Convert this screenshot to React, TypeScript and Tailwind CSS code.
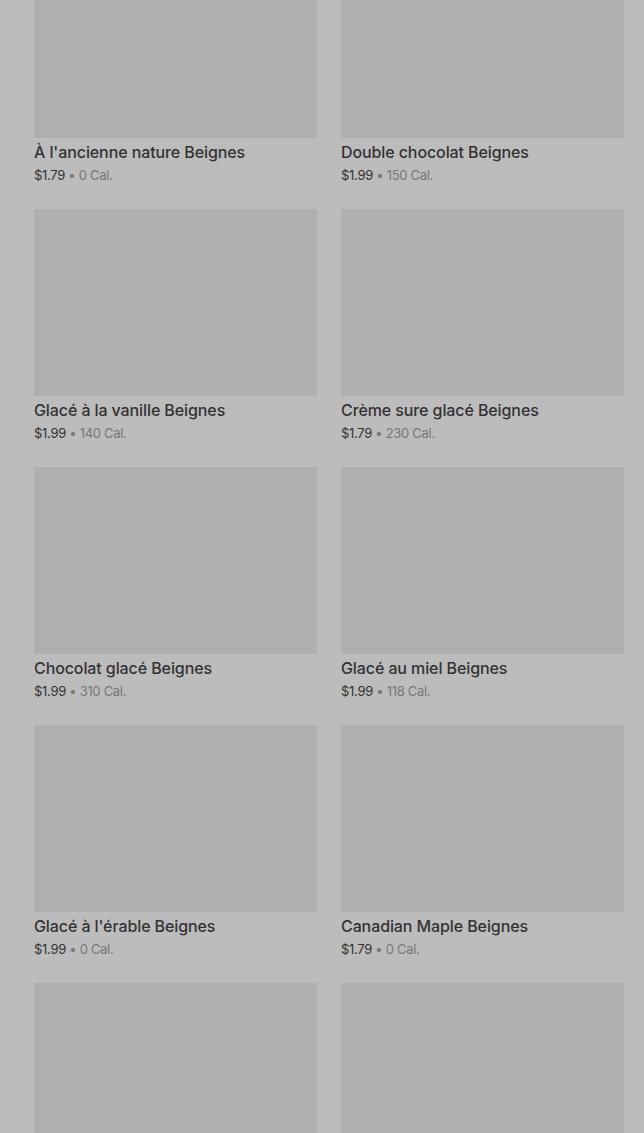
const items = [
  { name: "À l'ancienne nature Beignes", price: "$1.79", cal: "0 Cal." },
  { name: "Double chocolat Beignes", price: "$1.99", cal: "150 Cal." },
  { name: "Glacé à la vanille Beignes", price: "$1.99", cal: "140 Cal." },
  { name: "Crème sure glacé Beignes", price: "$1.79", cal: "230 Cal." },
  { name: "Chocolat glacé Beignes", price: "$1.99", cal: "310 Cal." },
  { name: "Glacé au miel Beignes", price: "$1.99", cal: "118 Cal." },
  { name: "Glacé à l'érable Beignes", price: "$1.99", cal: "0 Cal." },
  { name: "Canadian Maple Beignes", price: "$1.79", cal: "0 Cal." },
  null,
  null,
];

export default function App() {
  return (
    <div className="h-[1133px] overflow-hidden bg-[#bcbcbc] font-['Inter',sans-serif]">
      <div className="-mt-[49px] grid grid-cols-2 gap-x-6 gap-y-6 pl-[34px] pr-[20px]">
        {items.map((item, i) => (
          <div key={i} className="flex flex-col">
            <div className="h-[187px] bg-[#afafaf]" />
            {item && (
              <>
                <div className="mt-[4px] text-[16px] leading-5 font-medium tracking-[-0.1px] text-[#333333]">
                  {item.name}
                </div>
                <div className="mt-[3px] text-[13px] leading-5 tracking-[-0.3px]">
                  <span className="text-[#333333]">{item.price}</span>
                  <span className="text-[#777777]"> • {item.cal}</span>
                </div>
              </>
            )}
          </div>
        ))}
      </div>
    </div>
  );
}
